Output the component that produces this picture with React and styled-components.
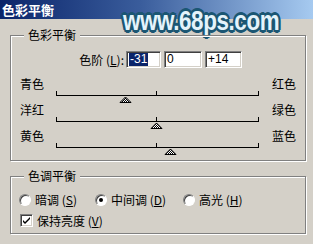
import React from 'react';
import styled, { createGlobalStyle } from 'styled-components';

const sliders = [
  { left: '青色', right: '红色', value: -31 },
  { left: '洋红', right: '绿色', value: 0 },
  { left: '黄色', right: '蓝色', value: 14 },
];

const levels = [
  { text: '-31', width: 35, selected: true },
  { text: '0', width: 38 },
  { text: '+14', width: 37 },
];

const tones = [
  { label: '暗调', key: 'S', width: 76 },
  { label: '中间调', key: 'D', width: 88, checked: true },
  { label: '高光', key: 'H' },
];

const SliderTrack = ({ value }) => {
  const cx = value + 100 + 0.5;
  return (
    <svg width="203" height="12" style={{ display: 'block' }}>
      <defs>
        <pattern id="dither" width="2" height="2" patternUnits="userSpaceOnUse">
          <rect width="2" height="2" fill="#fff" />
          <rect width="1" height="1" fill="#000" />
          <rect x="1" y="1" width="1" height="1" fill="#000" />
        </pattern>
      </defs>
      <rect x="0" y="4" width="203" height="1" fill="#000" />
      <rect x="0" y="0" width="1" height="5" fill="#000" />
      <rect x="100" y="0" width="1" height="5" fill="#000" />
      <rect x="202" y="0" width="1" height="5" fill="#000" />
      <polygon
        points={`${cx - 5.5},11.5 ${cx},6 ${cx + 5.5},11.5`}
        fill="url(#dither)"
        stroke="#000"
        strokeWidth="1"
      />
    </svg>
  );
};

const App = () => {
  return (
    <>
      <GlobalStyle />
      <Window>
        <TitleBar>色彩平衡</TitleBar>
        <Watermark>www.68ps.com</Watermark>
        <Group $height={126}>
          <Legend>色彩平衡</Legend>
          <LevelsRow>
            <LevelLabel>
              色阶 (<u>L</u>):
            </LevelLabel>
            {levels.map((l, i) => (
              <Field key={i} $width={l.width}>
                {l.selected ? <Selected>{l.text}</Selected> : l.text}
              </Field>
            ))}
          </LevelsRow>
          {sliders.map((s, i) => (
            <SliderBlock key={i} $first={i === 0}>
              <ColorLabels>
                <span>{s.left}</span>
                <span>{s.right}</span>
              </ColorLabels>
              <TrackWrap>
                <SliderTrack value={s.value} />
              </TrackWrap>
            </SliderBlock>
          ))}
        </Group>
        <Group $height={58} $gap={15}>
          <Legend>色调平衡</Legend>
          <RadioRow>
            {tones.map((t) => (
              <Option key={t.key} $width={t.width}>
                <Radio $checked={t.checked} />
                <span>
                  {t.label} (<u>{t.key}</u>)
                </span>
              </Option>
            ))}
          </RadioRow>
          <CheckRow>
            <CheckBox>
              <svg width="9" height="9" viewBox="0 0 9 9">
                <path d="M1 4 L3 6 L8 1 L8 3 L3 8 L1 6 Z" fill="#000" />
              </svg>
            </CheckBox>
            <span>
              保持亮度 (<u>V</u>)
            </span>
          </CheckRow>
        </Group>
      </Window>
    </>
  );
};

export default App;

const GlobalStyle = createGlobalStyle`
  html, body {
    margin: 0;
    padding: 0;
    background: #d4d0c8;
  }
  body {
    font-family: "Noto Sans CJK SC", "Liberation Sans", sans-serif;
    font-size: 12px;
    color: #000;
  }
  u {
    text-decoration: underline;
    text-underline-offset: 1px;
  }
`;

const Window = styled.div`
  position: relative;
  width: 313px;
  height: 244px;
  overflow: hidden;
  background: #d4d0c8;
`;

const TitleBar = styled.div`
  height: 19px;
  padding-left: 2px;
  line-height: 19px;
  font-size: 13px;
  font-weight: 700;
  color: #fff;
  background: linear-gradient(to right, #0a246a 0%, #3a5d9c 45%, #a6caf0 100%);
`;

const Watermark = styled.div`
  position: absolute;
  left: 123px;
  top: 5px;
  font-family: "Liberation Sans", Arial, sans-serif;
  font-weight: 700;
  font-size: 28px;
  line-height: 31px;
  letter-spacing: -0.5px;
  white-space: nowrap;
  color: #e4f3fb;
  transform: scaleX(0.8);
  transform-origin: left top;
  text-shadow:
    2px 0 0 #1b5673, -2px 0 0 #1b5673, 0 2px 0 #1b5673, 0 -2px 0 #1b5673,
    2px 2px 0 #1b5673, -2px -2px 0 #1b5673, 2px -2px 0 #1b5673, -2px 2px 0 #1b5673,
    3px 0 0 #1b5673, -3px 0 0 #1b5673, 0 3px 0 #1b5673, 0 -3px 0 #1b5673;
`;

const Group = styled.div`
  position: relative;
  box-sizing: border-box;
  width: 296px;
  height: ${(p) => p.$height}px;
  margin: ${(p) => p.$gap || 16}px 0 0 10px;
  border: 1px solid #808080;
  box-shadow: inset 1px 1px 0 #fff, 1px 1px 0 #fff;
`;

const Legend = styled.span`
  position: absolute;
  top: -8px;
  left: 13px;
  padding: 0 4px;
  line-height: 14px;
  background: #d4d0c8;
`;

const LevelsRow = styled.div`
  display: flex;
  align-items: center;
  gap: 3px;
  height: 17px;
  margin-top: 15px;
`;

const LevelLabel = styled.div`
  width: 113px;
  margin-right: -1px;
  text-align: right;
  line-height: 17px;
`;

const Field = styled.div`
  box-sizing: border-box;
  width: ${(p) => p.$width}px;
  height: 17px;
  padding: 1px 0 0 2px;
  background: #fff;
  border: 1px solid;
  border-color: #808080 #fff #fff #808080;
  box-shadow: inset 1px 1px 0 #404040, inset -1px -1px 0 #d4d0c8;
  font-family: "Liberation Sans", Arial, sans-serif;
  font-size: 12px;
  line-height: 13px;
`;

const Selected = styled.span`
  display: inline-block;
  padding: 0 1px;
  background: #0a246a;
  color: #fff;
`;

const SliderBlock = styled.div`
  margin-top: ${(p) => (p.$first ? 9 : 0)}px;
`;

const ColorLabels = styled.div`
  display: flex;
  justify-content: space-between;
  height: 14px;
  padding: 0 9px;
  line-height: 14px;
`;

const TrackWrap = styled.div`
  height: 12px;
  margin-left: 45px;
`;

const RadioRow = styled.div`
  display: flex;
  align-items: center;
  height: 13px;
  margin-top: 16px;
  padding-left: 8px;
`;

const Option = styled.label`
  display: flex;
  align-items: center;
  gap: 4px;
  width: ${(p) => (p.$width ? `${p.$width}px` : 'auto')};
  line-height: 13px;
`;

const Radio = styled.span`
  position: relative;
  box-sizing: border-box;
  width: 12px;
  height: 12px;
  border-radius: 50%;
  background: #fff;
  border: 1px solid;
  border-color: #808080 #fff #fff #808080;
  box-shadow: inset 1px 1px 0 #404040;

  &::after {
    content: '';
    display: ${(p) => (p.$checked ? 'block' : 'none')};
    position: absolute;
    left: 3px;
    top: 3px;
    width: 4px;
    height: 4px;
    border-radius: 50%;
    background: #000;
  }
`;

const CheckRow = styled.label`
  display: flex;
  align-items: center;
  gap: 4px;
  height: 13px;
  margin-top: 8px;
  padding-left: 9px;
  line-height: 13px;
`;

const CheckBox = styled.span`
  display: flex;
  align-items: center;
  justify-content: center;
  box-sizing: border-box;
  width: 13px;
  height: 13px;
  background: #fff;
  border: 1px solid;
  border-color: #808080 #fff #fff #808080;
  box-shadow: inset 1px 1px 0 #404040, inset -1px -1px 0 #d4d0c8;
`;
